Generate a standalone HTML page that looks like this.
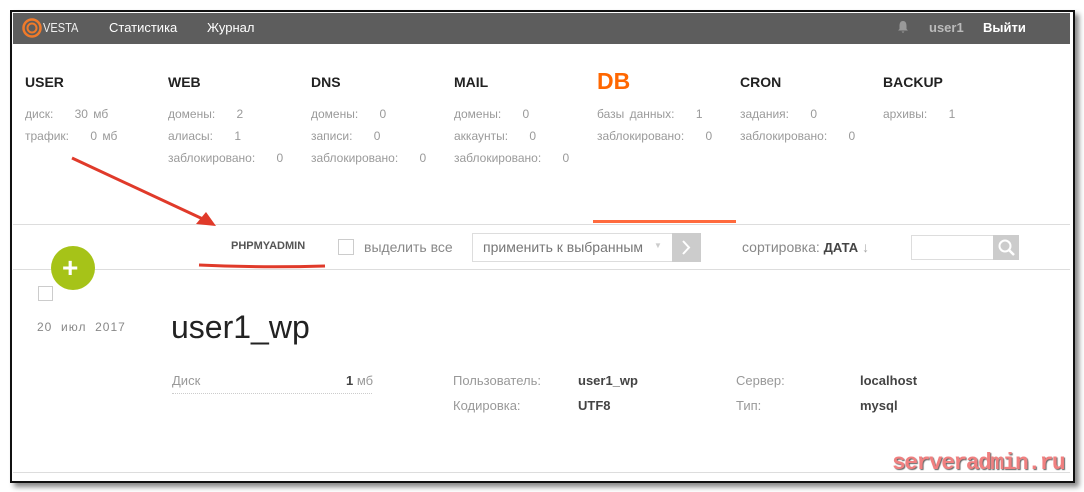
<!DOCTYPE html>
<html><head><meta charset="utf-8"><style>
body{margin:0;width:1084px;height:492px;background:#fff;position:relative;overflow:hidden;font-family:"Liberation Sans",Arial,sans-serif;}
.a{position:absolute;white-space:nowrap}
.frame{position:absolute;left:10px;top:10px;width:1061px;height:469px;border:2px solid #111;box-shadow:4px 4px 5px #888;background:#fff}
.hdr{position:absolute;left:13px;top:13px;width:1057px;height:31px;background:#5d5d5d}
.t{font-weight:bold;font-size:14px;color:#222}
.s{font-size:12px;color:#9a9a9a;word-spacing:2px}
.l{font-size:13px;color:#999}
.b{font-size:13px;color:#444;font-weight:bold}
</style></head><body>
<div class="frame"></div>
<div class="hdr"></div>
<svg class="a" style="left:21px;top:17px" width="22" height="22" viewBox="0 0 22 22"><circle cx="11" cy="11" r="8.5" fill="none" stroke="#f07a2a" stroke-width="2.5"/><circle cx="11" cy="11" r="4.5" fill="none" stroke="#f07a2a" stroke-width="2"/></svg>
<div class="a" style="left:43px;top:20px;color:#eee;font-size:13px;transform:scaleX(0.85);transform-origin:left">VESTA</div>
<div class="a" style="left:109px;top:20px;color:#fff;font-size:13px">Статистика</div>
<div class="a" style="left:207px;top:20px;color:#fff;font-size:13px">Журнал</div>
<svg class="a" style="left:897px;top:20px" width="12" height="13"><path d="M6 1 C3 1 2.5 4 2.5 6 L2.5 9 L1 10.5 L11 10.5 L9.5 9 L9.5 6 C9.5 4 9 1 6 1 Z M4.5 11.5 L7.5 11.5 L6 13 Z" fill="#999"/></svg>
<div class="a" style="left:929px;top:20px;color:#bbb;font-size:13px;font-weight:bold">user1</div>
<div class="a" style="left:983px;top:20px;color:#fff;font-size:13px;font-weight:bold">Выйти</div>

<div class="a t" style="left:25px;top:74px">USER</div>
<div class="a s" style="left:25px;top:107px">диск: &nbsp;&nbsp;&nbsp;30 мб</div>
<div class="a s" style="left:25px;top:129px">трафик: &nbsp;&nbsp;&nbsp;0 мб</div>

<div class="a t" style="left:168px;top:74px">WEB</div>
<div class="a s" style="left:168px;top:107px">домены: &nbsp;&nbsp;&nbsp;2</div>
<div class="a s" style="left:168px;top:129px">алиасы: &nbsp;&nbsp;&nbsp;1</div>
<div class="a s" style="left:168px;top:151px">заблокировано: &nbsp;&nbsp;&nbsp;0</div>

<div class="a t" style="left:311px;top:74px">DNS</div>
<div class="a s" style="left:311px;top:107px">домены: &nbsp;&nbsp;&nbsp;0</div>
<div class="a s" style="left:311px;top:129px">записи: &nbsp;&nbsp;&nbsp;0</div>
<div class="a s" style="left:311px;top:151px">заблокировано: &nbsp;&nbsp;&nbsp;0</div>

<div class="a t" style="left:454px;top:74px">MAIL</div>
<div class="a s" style="left:454px;top:107px">домены: &nbsp;&nbsp;&nbsp;0</div>
<div class="a s" style="left:454px;top:129px">аккаунты: &nbsp;&nbsp;&nbsp;0</div>
<div class="a s" style="left:454px;top:151px">заблокировано: &nbsp;&nbsp;&nbsp;0</div>

<div class="a" style="left:597px;top:68px;font-weight:bold;font-size:23px;color:#ff6701">DB</div>
<div class="a s" style="left:597px;top:107px">базы данных: &nbsp;&nbsp;&nbsp;1</div>
<div class="a s" style="left:597px;top:129px">заблокировано: &nbsp;&nbsp;&nbsp;0</div>

<div class="a t" style="left:740px;top:74px">CRON</div>
<div class="a s" style="left:740px;top:107px">задания: &nbsp;&nbsp;&nbsp;0</div>
<div class="a s" style="left:740px;top:129px">заблокировано: &nbsp;&nbsp;&nbsp;0</div>

<div class="a t" style="left:883px;top:74px">BACKUP</div>
<div class="a s" style="left:883px;top:107px">архивы: &nbsp;&nbsp;&nbsp;1</div>

<div class="a" style="left:13px;top:224px;width:1057px;height:1px;background:#ddd"></div>
<div class="a" style="left:593px;top:220px;width:143px;height:3px;background:#ff6a3d"></div>
<div class="a" style="left:13px;top:269px;width:1057px;height:1px;background:#ddd"></div>

<div class="a" style="left:231px;top:240px;font-size:11px;font-weight:bold;color:#555">PHPMYADMIN</div>
<div class="a" style="left:338px;top:239px;width:14px;height:14px;border:1px solid #ccc"></div>
<div class="a" style="left:364px;top:239px;font-size:14px;color:#888">выделить все</div>
<div class="a" style="left:472px;top:233px;width:199px;height:27px;border:1px solid #ddd"></div>
<div class="a" style="left:483px;top:239px;font-size:14px;color:#777">применить к выбранным</div>
<div class="a" style="left:654px;top:241px;font-size:8px;color:#ccc">▼</div>
<div class="a" style="left:672px;top:233px;width:29px;height:29px;background:#ccc"></div>
<svg class="a" style="left:672px;top:233px" width="29" height="29"><path d="M11 8 L17 14.5 L11 21" fill="none" stroke="#fff" stroke-width="2"/></svg>
<div class="a" style="left:742px;top:239px;font-size:14px;color:#888">сортировка: <b style="color:#444;font-size:13px">ДАТА</b> <span style="color:#aaa">↓</span></div>
<div class="a" style="left:911px;top:235px;width:81px;height:23px;border:1px solid #ddd"></div>
<div class="a" style="left:993px;top:235px;width:26px;height:25px;background:#ccc"></div>
<svg class="a" style="left:993px;top:235px" width="26" height="25"><circle cx="12" cy="11" r="5.5" fill="none" stroke="#fff" stroke-width="2"/><path d="M16 15 L21 20" stroke="#fff" stroke-width="2.5"/></svg>

<svg class="a" style="left:0;top:0" width="1084" height="492"><path d="M72 158 L205 220" stroke="#e03a2a" stroke-width="3"/><path d="M216 226 L196 224 L206 212 Z" fill="#e03a2a"/><path d="M199 265 Q262 268 325 266" stroke="#e03a2a" stroke-width="3" fill="none"/></svg>

<div class="a" style="left:51px;top:246px;width:44px;height:44px;border-radius:50%;background:#a6c318"></div>
<div class="a" style="left:62px;top:250px;font-size:28px;font-weight:bold;color:#fff;line-height:36px">+</div>
<div class="a" style="left:38px;top:286px;width:13px;height:13px;border:1px solid #ccc"></div>

<div class="a" style="left:37px;top:320px;font-size:12px;color:#888;letter-spacing:1px">20 &nbsp;июл &nbsp;2017</div>
<div class="a" style="left:171px;top:309px;font-size:32px;color:#222">user1_wp</div>
<div class="a l" style="left:172px;top:373px">Диск</div>
<div class="a l" style="left:346px;top:373px"><b style="color:#444">1</b> мб</div>
<div class="a" style="left:172px;top:393px;width:200px;border-top:1px dotted #ccc"></div>
<div class="a l" style="left:453px;top:373px">Пользователь:</div>
<div class="a b" style="left:578px;top:373px">user1_wp</div>
<div class="a l" style="left:453px;top:398px">Кодировка:</div>
<div class="a b" style="left:578px;top:398px">UTF8</div>
<div class="a l" style="left:736px;top:373px">Сервер:</div>
<div class="a b" style="left:860px;top:373px">localhost</div>
<div class="a l" style="left:736px;top:398px">Тип:</div>
<div class="a b" style="left:860px;top:398px">mysql</div>

<div class="a" style="left:13px;top:472px;width:1057px;height:1px;background:#ddd"></div>
<div class="a" style="left:892px;top:450px;font-family:'Liberation Mono',monospace;font-size:23px;font-weight:bold;color:#f08080;text-shadow:1px 1px 1px #666;letter-spacing:-1.5px">serveradmin.ru</div>
</body></html>
